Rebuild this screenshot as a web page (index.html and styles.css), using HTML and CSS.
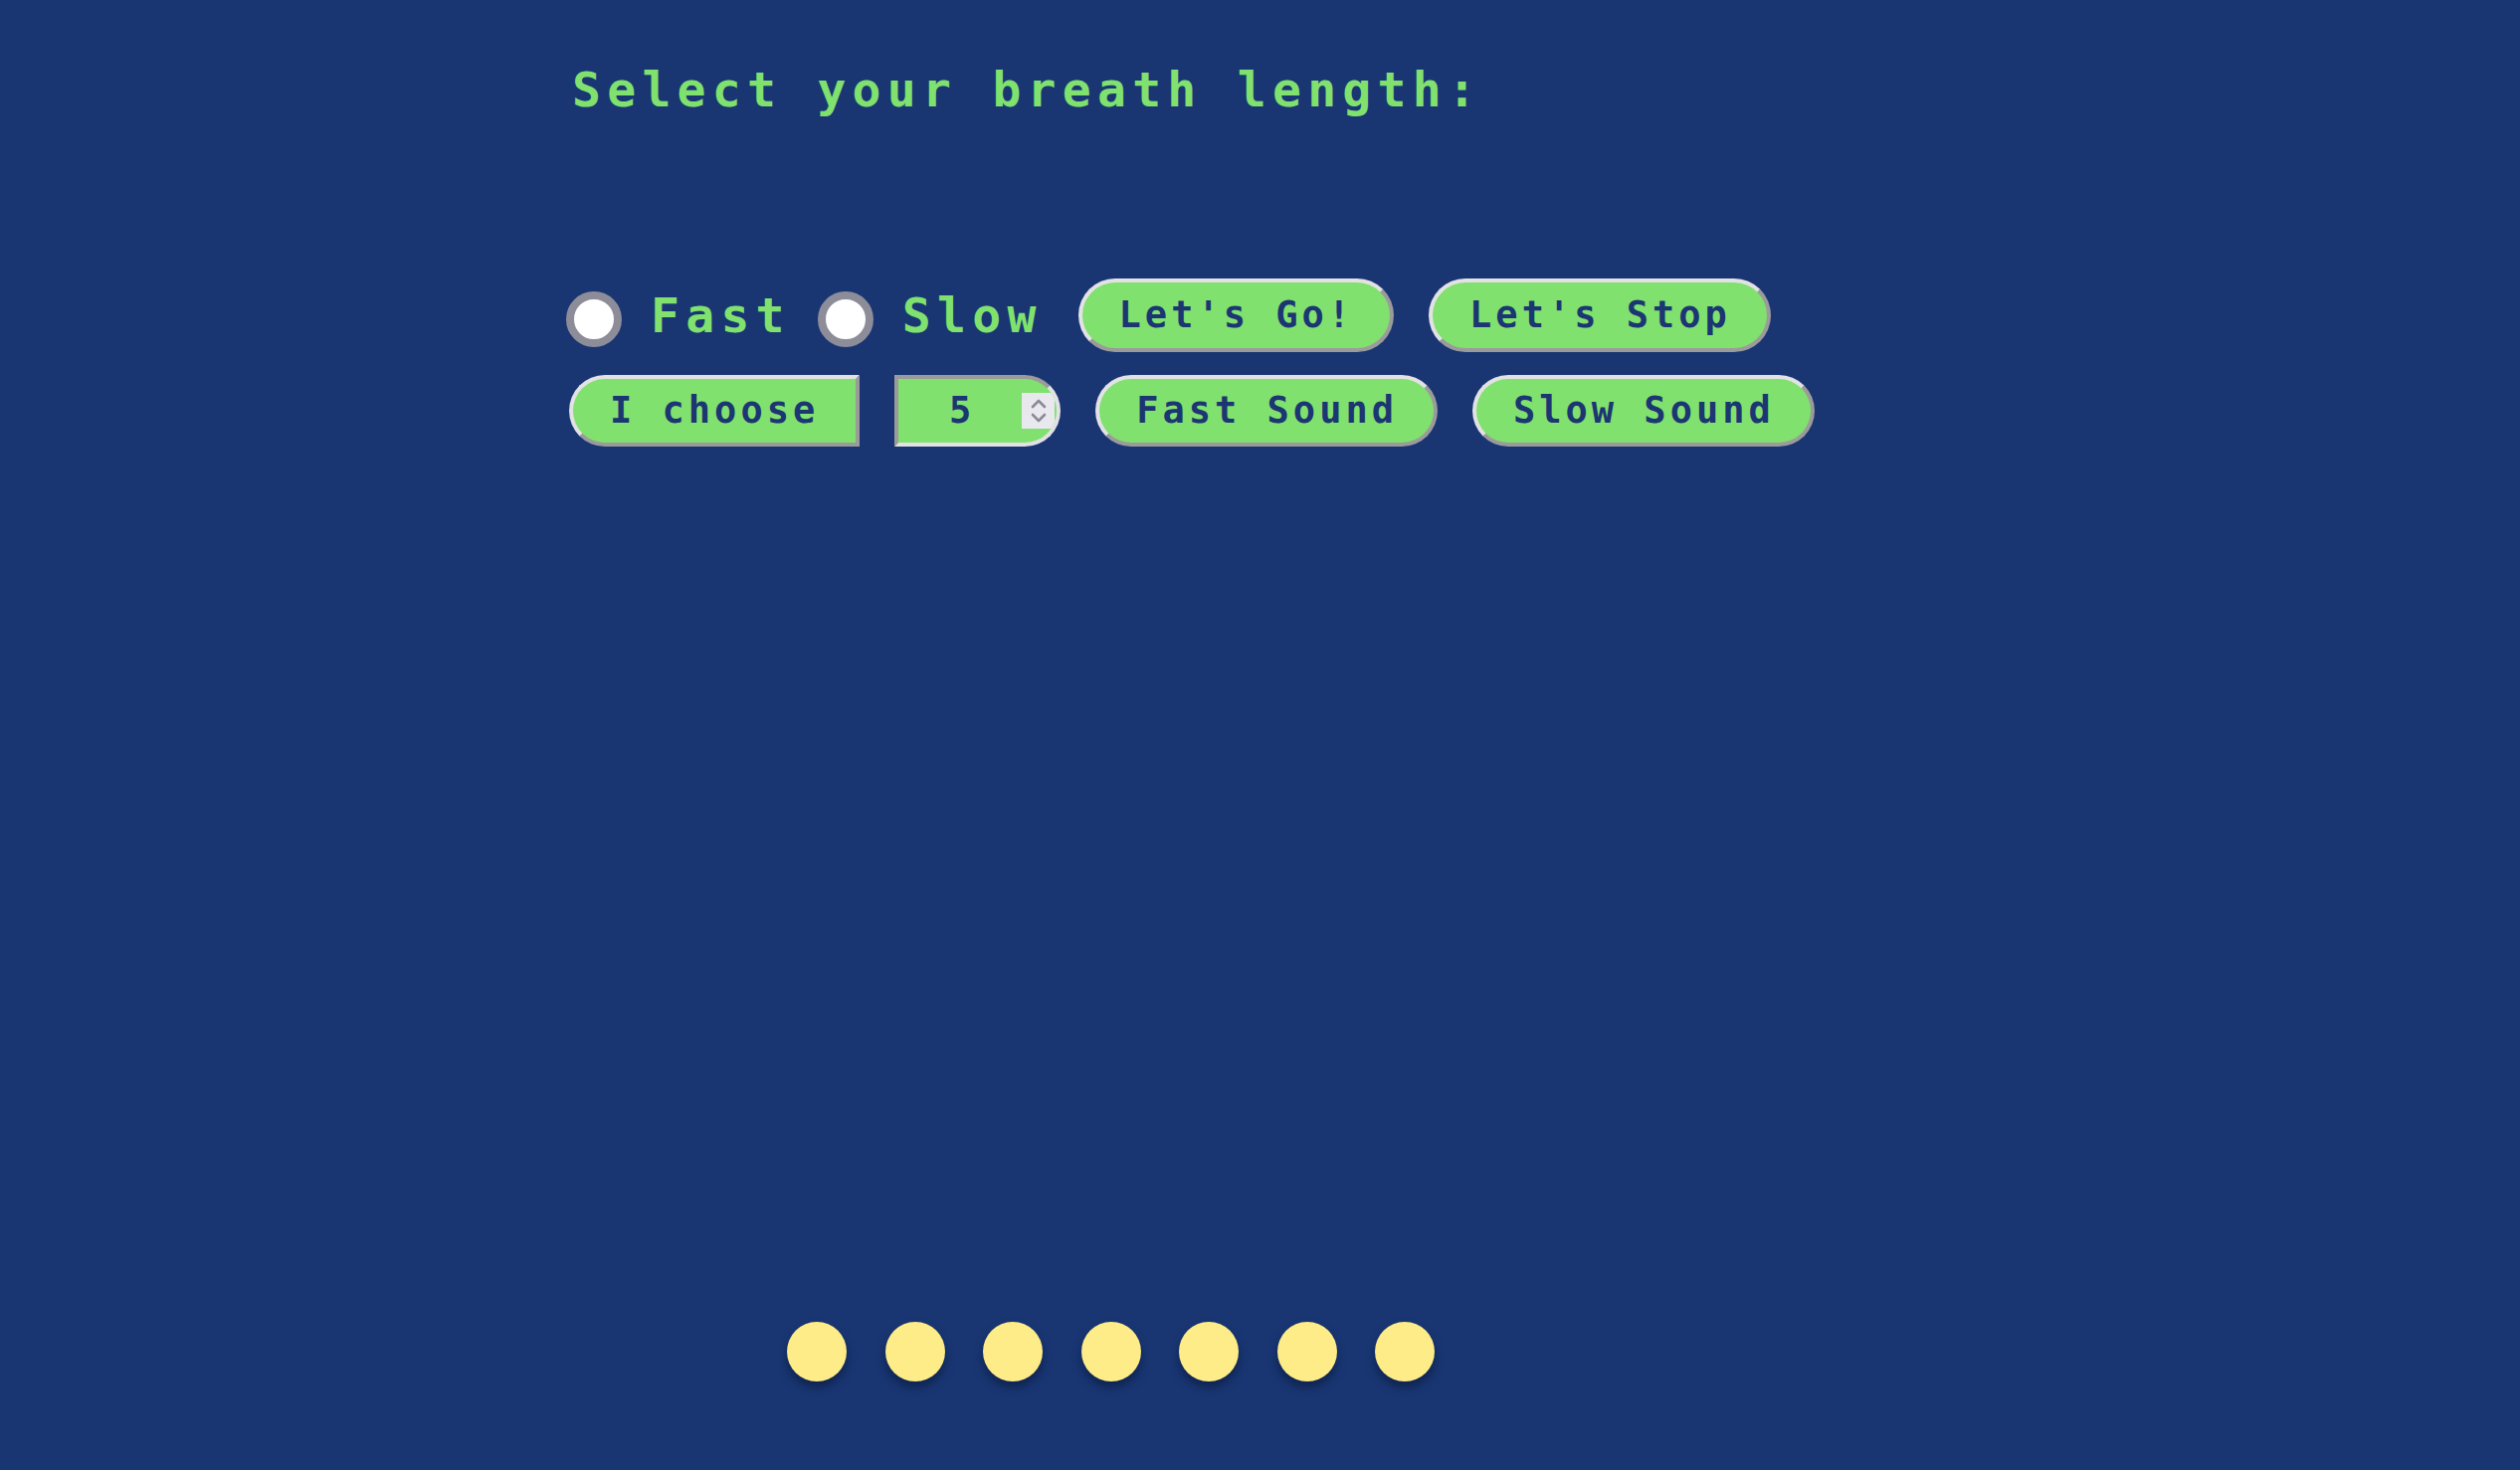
FILE: index.html
```html
<!DOCTYPE html>
<html lang="en">
<head>
<meta charset="utf-8">
<title>Breath</title>
<link rel="stylesheet" href="styles.css">
</head>
<body>
<main class="page">
  <h1 class="title">Select your breath length:</h1>

  <div class="row row-one">
    <label class="choice">
      <input class="radio" type="radio" name="len" value="fast">
      <span class="choice-text">Fast</span>
    </label>
    <label class="choice">
      <input class="radio" type="radio" name="len" value="slow">
      <span class="choice-text">Slow</span>
    </label>
    <button class="btn btn-go" type="button">Let's Go!</button>
    <button class="btn" type="button">Let's Stop</button>
  </div>

  <div class="row row-two">
    <button class="btn btn-left" type="button">I choose</button>
    <div class="numbox">
      <input class="num-input" type="number" value="5" min="1" max="20">
      <span class="spinner">
        <svg width="20" height="30" viewBox="0 0 20 30" aria-hidden="true">
          <path d="M4 11 L10 5 L16 11" fill="none" stroke="#8b8b98" stroke-width="2.6" stroke-linecap="round" stroke-linejoin="round"/>
          <path d="M4 19 L10 25 L16 19" fill="none" stroke="#8b8b98" stroke-width="2.6" stroke-linecap="round" stroke-linejoin="round"/>
        </svg>
      </span>
    </div>
    <button class="btn" type="button">Fast Sound</button>
    <button class="btn" type="button">Slow Sound</button>
  </div>

  <div class="dots">
    <span class="dot"></span>
    <span class="dot"></span>
    <span class="dot"></span>
    <span class="dot"></span>
    <span class="dot"></span>
    <span class="dot"></span>
    <span class="dot"></span>
  </div>
</main>
</body>
</html>
```

FILE: styles.css
```css
html, body {
  margin: 0;
  padding: 0;
}

body {
  background: #193673;
  min-height: 100vh;
  font-family: "DejaVu Sans Mono", "Liberation Mono", monospace;
}

.page {
  padding-left: 569px;
  padding-top: 62px;
}

.title {
  margin: 0 0 0 6px;
  font-size: 48px;
  line-height: 57.6px;
  font-weight: bold;
  letter-spacing: 6.3px;
  color: #80e16e;
}

.row {
  display: flex;
  align-items: center;
}

.row-one {
  margin-top: 160px;
}

.row-two {
  margin-top: 23px;
  margin-left: 3px;
  gap: 35px;
}

.choice {
  display: flex;
  align-items: center;
  margin-right: 27px;
  cursor: pointer;
}

.choice + .choice {
  margin-right: 36px;
}

.radio {
  appearance: none;
  -webkit-appearance: none;
  margin: 8px 29px 0 0;
  width: 56px;
  height: 56px;
  box-sizing: border-box;
  border-radius: 50%;
  border: 8px solid #8d8d99;
  background: #ffffff;
}

.choice-text {
  font-size: 48px;
  line-height: 56px;
  font-weight: bold;
  letter-spacing: 6.3px;
  color: #80e16e;
}

.btn {
  font-family: "DejaVu Sans Mono", "Liberation Mono", monospace;
  font-size: 37px;
  line-height: 42px;
  font-weight: bold;
  letter-spacing: 4px;
  color: #1b3672;
  background: #80e16e;
  padding: 12px 36px 12px 37px;
  border: 4px solid;
  border-color: #e2e2e4 #9b9b9b #9b9b9b #e2e2e4;
  border-radius: 37px;
  cursor: pointer;
}

.btn-go {
  margin-right: 35px;
}

.row-two .btn {
  padding-top: 11px;
  padding-bottom: 11px;
}

.btn-left {
  border-radius: 36px 0 0 36px;
  padding-left: 37px;
  padding-right: 37px;
}

.numbox {
  display: flex;
  align-items: center;
  width: 167px;
  height: 72px;
  box-sizing: border-box;
  background: #80e16e;
  border: 4px solid;
  border-color: #9b9b9b #e2e2e4 #e2e2e4 #9b9b9b;
  border-radius: 0 36px 36px 0;
  overflow: hidden;
}

.num-input {
  flex: 1;
  min-width: 0;
  height: 100%;
  border: 0;
  padding: 0;
  margin: 0;
  background: transparent;
  text-align: center;
  font-family: "DejaVu Sans Mono", "Liberation Mono", monospace;
  font-size: 37px;
  font-weight: bold;
  color: #1b3672;
  -moz-appearance: textfield;
  outline: none;
}

.num-input::-webkit-outer-spin-button,
.num-input::-webkit-inner-spin-button {
  -webkit-appearance: none;
  margin: 0;
}

.spinner {
  display: flex;
  align-items: center;
  justify-content: center;
  width: 33px;
  height: 36px;
  margin-right: 2px;
  background: #e8e8ee;
}

.dots {
  display: flex;
  gap: 38.5px;
  margin-top: 880px;
  margin-left: 222px;
}

.dot {
  width: 60px;
  height: 60px;
  border-radius: 50%;
  background: #fdec88;
  box-shadow: 0 6px 8px rgba(8, 20, 50, 0.55);
}
```
